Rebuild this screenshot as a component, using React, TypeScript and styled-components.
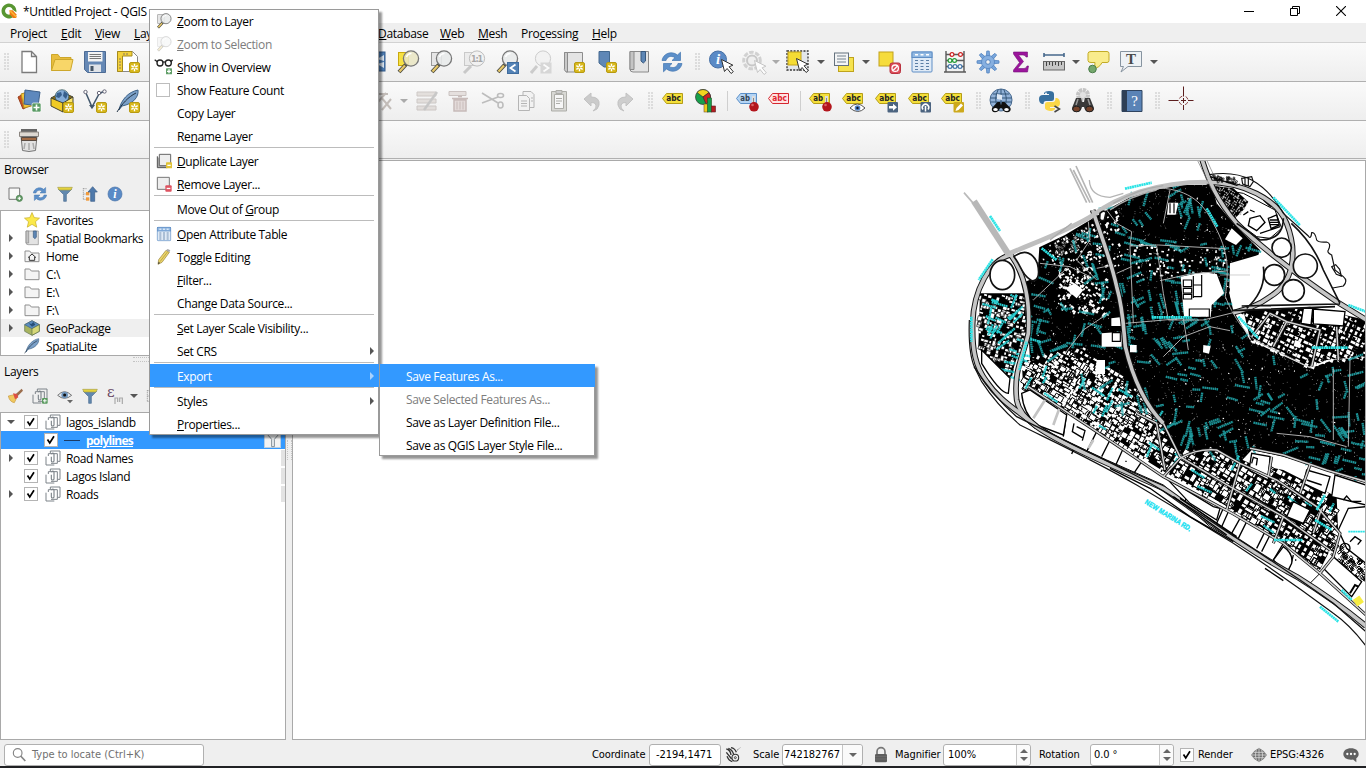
import React from "react";
import styled, { createGlobalStyle } from "styled-components";

const Global = createGlobalStyle`
  * { box-sizing: border-box; }
  html, body { margin: 0; padding: 0; overflow: hidden; background: #efefef; }
  body { font-family: "Open Sans", "Noto Sans", sans-serif; font-size: 12px; color: #000; }
`;

const line = "#a9a9a9";

/* ---------- layout parts ---------- */
const Window = styled.div`
  width: 1366px; height: 768px; display: flex; flex-direction: column;
  position: relative; background: #efefef; overflow: hidden;
`;
const TitleBar = styled.header`
  height: 23px; flex: none; background: #fff; display: flex; align-items: center; padding: 0 2px 2px 1px;
`;
const TitleText = styled.span`margin-left: 6px; padding-top: 1px; letter-spacing: -0.33px; flex: 1; white-space: nowrap;`;
const WinButton = styled.span`width: 46px; height: 20px; display: flex; align-items: center; justify-content: center;`;
const MenuBar = styled.nav`
  height: 20px; flex: none; display: flex; align-items: center; padding-left: 10px;
  border-bottom: 1px solid #d2d2d2; letter-spacing: -0.3px;
`;
const MenuName = styled.span<{ $w: number }>`width: ${(p) => p.$w}px; white-space: nowrap; flex: none; padding-top: 1px;`;
const ToolRow = styled.div<{ $h: number }>`
  height: ${(p) => p.$h}px; flex: none; display: flex; align-items: center; padding-left: 4px;
  background: linear-gradient(#fafafa, #eeeeee); border-bottom: 1px solid #b0b0b0;
`;
const Handle = styled.span<{ $ml?: number }>`
  width: 6px; height: 18px; flex: none; margin-left: ${(p) => p.$ml ?? 0}px;
  background-image: radial-gradient(circle at 1px 1px, #cfcfcf 0.6px, transparent 0.9px);
  background-size: 3px 3px;
`;
const Divider = styled.span<{ $ml: number }>`
  width: 1px; height: 20px; flex: none; margin-left: ${(p) => p.$ml}px; background: #cfcfcf;
`;
const Tool = styled.span<{ $ml: number }>`
  width: 24px; height: 24px; flex: none; margin-left: ${(p) => p.$ml}px; display: flex;
`;
const Caret = styled.span<{ $ml: number; $faded?: boolean }>`
  flex: none; margin-left: ${(p) => p.$ml}px; width: 8px; height: 0; position: relative; left: 1px;
  border: 4px solid transparent; border-top-color: ${(p) => (p.$faded ? "#aaa" : "#555")}; border-bottom: 0;
`;
const Work = styled.main`height: 581px; flex: none; display: flex; padding-top: 1px;`;
const Docks = styled.aside`width: 286px; flex: none; display: flex; flex-direction: column;`;
const DockTitle = styled.div`height: 22px; padding: 1px 0 0 4px; letter-spacing: -0.3px;`;
const DockTools = styled.div`
  height: 28px; display: flex; align-items: center; gap: 9px; padding: 0 0 4px 7px;
`;
const Tree = styled.div<{ $h: number }>`
  height: ${(p) => p.$h}px; flex: none; background: #fff; border: 1px solid ${line}; overflow: hidden;
`;
const TreeRow = styled.div<{ $bg?: string; $fg?: string }>`
  height: 18px; display: flex; align-items: center; white-space: nowrap; letter-spacing: -0.4px;
  background: ${(p) => p.$bg ?? "transparent"}; color: ${(p) => p.$fg ?? "#000"};
`;
const Twisty = styled.span<{ $kind: "closed" | "open" | "none" }>`
  width: 20px; flex: none; display: flex; padding-left: ${(p) => (p.$kind === "open" ? 6 : 8)}px;
  &::before {
    content: ""; display: ${(p) => (p.$kind === "none" ? "none" : "block")};
    border: 4px solid transparent;
    ${(p) => (p.$kind === "open" ? "border-top-color:#555;border-bottom:0;" : "border-left-color:#555;border-right:0;")}
  }
`;
const TreeIcon = styled.span<{ $ml?: number }>`width: 16px; height: 16px; display: flex; flex: none; margin-left: ${(p) => p.$ml ?? 3}px;`;
const TreeText = styled.span<{ $ml: number; $strong?: boolean }>`
  margin-left: ${(p) => p.$ml}px; padding-top: 1px; font-weight: ${(p) => (p.$strong ? 700 : 400)};
  text-decoration: ${(p) => (p.$strong ? "underline" : "none")};
  ${(p) => p.$strong && "letter-spacing:-0.75px;"}
`;
const RowEnd = styled.span<{ $wide?: boolean }>`
  margin-left: auto; height: 16px; width: 4px; background: #e3e3e3;
  display: flex; justify-content: center; align-items: center;
  ${(p) => p.$wide && "width:17px;margin-right:4px;background:#f3f3f3;border:1px solid #b9cfe4;"}
`;
const Check = styled.span<{ $ml?: number }>`
  width: 14px; height: 14px; border: 1px solid #b4b4b4; background: #fff; flex: none; display: flex;
  margin-left: ${(p) => p.$ml ?? 0}px;
`;
const HSplit = styled.div`
  height: 6px; flex: none; display: flex; justify-content: center; align-items: center;
  &::before { content: ""; width: 20px; height: 3px; border: dotted #c4c4c4; border-width: 1px 0; }
`;
const VSplit = styled.div`
  width: 6px; flex: none; display: flex; justify-content: center; align-items: center;
  &::before { content: ""; height: 20px; width: 3px; border: dotted #c4c4c4; border-width: 0 1px; }
`;
const MapFrame = styled.section`flex: 1; background: #fff; border: 1px solid ${line}; display: flex; min-width: 0; overflow: hidden;`;

const Status = styled.footer`
  height: 26px; flex: none; display: flex; align-items: center; padding: 3px 0 0 4px;
  font-family: "DejaVu Sans Condensed", "DejaVu Sans", sans-serif; font-stretch: condensed; font-size: 11px; letter-spacing: -0.08px;
`;
const TaskEdge = styled.div`height: 2px; flex: none; background: #202124;`;
const Field = styled.div<{ $w: number; $ml: number; $pad?: number }>`
  width: ${(p) => p.$w}px; height: 22px; margin-left: ${(p) => p.$ml}px; padding-left: ${(p) => p.$pad ?? 4}px;
  background: #fff; border: 1px solid #b0b0b0; border-radius: 3px; display: flex; align-items: center; flex: none;
  white-space: nowrap;
`;
const FieldEnd = styled.span<{ $w: number }>`
  margin-left: auto; width: ${(p) => p.$w}px; height: 20px; border-left: 1px solid #c6c6c6; display: flex; flex-direction: column;
  align-items: center; justify-content: center; gap: 4px; background: #fafafa; border-radius: 0 3px 3px 0;
`;
const Tri = styled.i<{ $up?: boolean }>`
  width: 0; height: 0; border: 4px solid transparent;
  ${(p) => (p.$up ? "border-bottom-color:#666;border-top:0;" : "border-top-color:#666;border-bottom:0;")}
`;
const StatusText = styled.span<{ $w: number; $ml: number }>`
  width: ${(p) => p.$w}px; margin-left: ${(p) => p.$ml}px; flex: none; white-space: nowrap;
`;
const Placeholder = styled.span`color: #707070; margin-left: 4px; letter-spacing: 0;`;
const StatusIcon = styled.span<{ $ml: number }>`width: 16px; height: 16px; flex: none; display: flex; margin-left: ${(p) => p.$ml}px;`;

/* ---------- popup menus ---------- */
const Popup = styled.div<{ $x: number; $y: number; $w: number }>`
  position: absolute; left: ${(p) => p.$x}px; top: ${(p) => p.$y}px; width: ${(p) => p.$w}px;
  background: #fff; box-shadow: inset 0 0 0 1px #9a9a9a, 3px 3px 2px rgba(0, 0, 0, 0.42);
  letter-spacing: -0.35px;
`;
const Item = styled.div<{ $state?: "on" | "off" }>`
  height: 23px; display: flex; align-items: center; padding: 1px 5px 0 0; margin-left: 1px; white-space: nowrap;
  background: ${(p) => (p.$state === "on" ? "#3399ff" : "transparent")};
  color: ${(p) => (p.$state === "on" ? "#fff" : p.$state === "off" ? "#7d7d7d" : "#000")};
`;
const ItemIcon = styled.span<{ $w: number }>`width: ${(p) => p.$w}px; height: 16px; padding-left: 6px; flex: none; display: flex;`;
const ItemBox = styled.span`width: 14px; height: 14px; margin-top: 1px; border: 1px solid #bdbdbd; background: #fff;`;
const Arrow = styled.span<{ $on?: boolean }>`
  margin-left: auto; border: 4px solid transparent; border-left-color: ${(p) => (p.$on ? "#a8d2ff" : "#555")}; border-right: 0;
`;
const Rule = styled.div`height: 2px; margin: 0 5px; border-top: 1px solid #bcbcbc;`;

/* ---------- icons ---------- */
const StarBadge = ({ x = 12, y = 12 }: { x?: number; y?: number }) => (
  <g transform={`translate(${x} ${y})`}>
    <rect x=".5" y=".5" width="10" height="10" rx="1.5" fill="#d8b81c" stroke="#b79a10" />
    <path d="M5.5 1.8v7.4M2.3 3.6l6.4 3.8M8.7 3.6L2.3 7.4" stroke="#fff" strokeWidth="1.4" />
    <circle cx="5.5" cy="5.5" r="1.1" fill="#d8b81c" />
  </g>
);
const Glass = ({ lens = "#e8eaea" }: { lens?: string }) => (
  <g>
    <path d="M10 14.5L3 22" stroke="#4a4a40" strokeWidth="4" />
    <path d="M9 15.5L3.5 21.5" stroke="#e8c96a" strokeWidth="2.2" />
    <circle cx="15" cy="8.5" r="7.6" fill={lens} fillOpacity=".88" stroke="#777" strokeWidth="1.3" />
    <path d="M10.5 7q1.5-3.5 5-3.4" stroke="#fff" fill="none" strokeWidth="1.5" />
  </g>
);
const Tag = ({ fill = "#f4df3a", edge = "#b59d18", ink = "#222", text = "abc" }: { fill?: string; edge?: string; ink?: string; text?: string }) => (
  <g>
    <path d="M1.5 9.500l4-5h16v10h-16z" fill={fill} stroke={edge} />
    <text x="5.200" y="12.300" fontFamily="DejaVu Sans" fontWeight="700" fontSize="8" textLength={text.length * 4.900} lengthAdjust="spacingAndGlyphs" fill={ink}>{text}</text>
  </g>
);
const Pin = () => (
  <g><path d="M18.500 7v9" stroke="#ddd" strokeWidth="3" /><path d="M18.500 9v8" stroke="#888" /><circle cx="19" cy="17.800" r="4.800" fill="#b3151c" /><circle cx="17.500" cy="16" r="1.300" fill="#d96064" /></g>
);
const Cursor = ({ x = 12, y = 9, edge = "#333" }: { x?: number; y?: number; edge?: string }) => (
  <path transform={`translate(${x} ${y})`} d="M.5.5l3 12 2.600-3 4 5 2.200-1.800-4.200-4.900 3.800-1.600z" fill="#fff" stroke={edge} strokeWidth="1" />
);
const Refresh = () => (
  <g fill="#5c8fc9" stroke="#4276b0" strokeWidth=".7">
    <path d="M2 10.500C3 4 11 0 17.500 5L20.500 2.200V10.500H12L15 7.600C10.500 5 7 7 6 10.500z" />
    <path d="M22 13.500C21 20 13 24 6.500 19L3.500 21.800V13.500H12L9 16.400C13.500 19 17 17 18 13.500z" />
  </g>
);
const Info = ({ r = 11, cx = 12, cy = 12 }: { r?: number; cx?: number; cy?: number }) => (
  <g>
    <circle cx={cx} cy={cy} r={r - 0.5} fill="#5a8ac6" stroke="#466fa5" />
    <text x={cx} y={cy + r * 0.55} textAnchor="middle" fontFamily="Liberation Serif" fontWeight="700" fontStyle="italic" fontSize={r * 1.65} fill="#fff">i</text>
  </g>
);
const Funnel = () => (
  <g><path d="M2 5h20l-8 8v10h-4V13z" fill="#6288ae" stroke="#4a6d92" /><path d="M1 2h22l-2 4H3z" fill="#e4d23c" stroke="#a8a04a" /></g>
);
const GeoBox = () => (
  <g>
    <path d="M1 9l11-6 11 5-10 6z" fill="#8c6c12" stroke="#443" />
    <circle cx="12" cy="7.500" r="6.800" fill="#83acd8" stroke="#355" strokeWidth=".7" />
    <path d="M7 4l4-1 1 3-3 3-3-1zM14 2l4 3-2 5-3-3z" fill="#365f8d" />
    <path d="M1 9l12 5v9L1 17z" fill="#f0cb25" stroke="#443" /><path d="M13 14l10-6v9l-10 6z" fill="#fbe66b" stroke="#443" />
  </g>
);
const Feather = () => (
  <g><path d="M3 21C5 11 12 3 22 1c1 7-5 14-16 16z" fill="#7ba0c8" stroke="#3d6288" /><path d="M1 23C6 15 12 8 20 4" stroke="#234" fill="none" /></g>
);
const Table = () => (
  <g>
    <rect x="2" y="2" width="20" height="20" rx="1" fill="#dfeaf6" stroke="#5f8ec5" /><rect x="2" y="2" width="20" height="5.500" fill="#91b8e2" stroke="#5f8ec5" />
    <path d="M5 4.800h3M10.500 4.800h3M16 4.800h3" stroke="#fff" strokeWidth="1.400" />
    <path d="M5 10.500h3M5 13.500h3M5 16.500h3M5 19.500h3M10.500 10.500h3M10.500 13.500h3M10.500 16.500h3M10.500 19.500h3M16 10.500h3M16 13.500h3M16 16.500h3M16 19.500h3" stroke="#5b7ea5" strokeWidth="1.200" />
  </g>
);
const GroupGlyph = () => (
  <g fill="none" stroke="#7c8389" strokeWidth="1.500">
    <path d="M8 5V1.500h14.500V17H19" /><path d="M5 9V5.500h13.500V20H9" /><path d="M1.500 10v12.500H14" />
    <path d="M9.500 10v6a2 2 0 004 0V6.500a1.800 1.800 0 00-3.600 0" strokeWidth="1.700" />
  </g>
);
const Folder = () => <path d="M1.500 20.500v-16h7l2.500 3h11.500v13z" fill="#f4f4f4" stroke="#8e8e8e" strokeWidth="1.500" />;
const EyeGlyph = () => (
  <g><path d="M1 11Q11 0 22 11 11 20 1 11z" fill="#e4e9ee" stroke="#777" strokeWidth="1.500" /><circle cx="11.500" cy="10.500" r="5" fill="#6f95bc" /><circle cx="11.500" cy="10.500" r="2.300" fill="#111" /></g>
);

const glyphs: Record<string, React.ReactNode> = {
  newFile: <path d="M5 1.500h9.500l5 5v16H5z M14.500 1.500v5h5" fill="#fff" stroke="#7b7b7b" strokeWidth="1.300" />,
  open: <g stroke="#cda72b"><path d="M1.500 20.500V4.500h6.500l2 3h11v5" fill="#e8bd3d" /><path d="M1.500 20.500l3.500-11h18l-2.500 11z" fill="#f8d668" /></g>,
  save: <g><path d="M1.500 1.500h21v21h-18l-3-3z" fill="#6588b5" stroke="#4d6b94" /><rect x="5" y="2" width="14.500" height="9.500" fill="#f4f4f4" /><path d="M6.500 4.500h11.500M6.500 6.500h11.500M6.500 8.500h11.500" stroke="#777" /><rect x="6" y="14.500" width="12" height="7.500" fill="#dfe3e8" /><rect x="7.500" y="16" width="3" height="5" fill="#456" /></g>,
  layout: <g><path d="M1.500 1.500h15l5 5v15h-20z" fill="#fff" stroke="#888" /><path d="M1.500 1.500H16V6H6.500v15.500h-5z" fill="#f3d13b" stroke="#a58a1c" /><path d="M3 9h2M3 12h2M3 15h2M3 18h2M8 3v2M11 3v2" stroke="#876" /><StarBadge x={13} /></g>,
  zoomFull: <g><rect x="8" y="2" width="14" height="19" fill="#4f7fb5" stroke="#335b8b" /><path d="M14 9l7-4v6zM14 14l7 4v-6z" fill="#dce7f3" /></g>,
  zoomSel: <g><rect x="2.500" y="2.500" width="10" height="13" fill="#f6e143" stroke="#c9a90e" /><Glass lens="#e9e6c4" /></g>,
  zoomLayer: <g><rect x="2.500" y="2.500" width="10" height="13" fill="#e6e6e6" stroke="#999" /><Glass /></g>,
  zoomNative: <g opacity=".75"><rect x="2.500" y="2.500" width="10" height="13" fill="#e9e9e9" stroke="#bbb" /><path d="M9 16l-7 7" stroke="#bbb" strokeWidth="3" /><circle cx="15" cy="8.500" r="7.600" fill="#f1f1f1" stroke="#aaa" /><text x="15" y="11.800" textAnchor="middle" fontFamily="DejaVu Sans" fontWeight="700" fontSize="8" textLength="12" fill="#8e8e8e">1:1</text></g>,
  zoomLast: <g><Glass /><rect x="12.500" y="12.500" width="11" height="11" fill="#5382b6" stroke="#3f6c9e" /><path d="M20.500 14.500l-5 3.500 5 3.500" stroke="#fff" strokeWidth="1.800" fill="none" /></g>,
  zoomNext: <g opacity=".7"><path d="M9 16l-6 7" stroke="#bbb" strokeWidth="3" /><circle cx="15" cy="8.500" r="7.600" fill="#f1f1f1" stroke="#bbb" /><rect x="12.500" y="12.500" width="11" height="11" fill="#ccc" /><path d="M15.500 14.500l5 3.500-5 3.500" stroke="#fff" strokeWidth="1.800" fill="none" /></g>,
  mapView: <g><path d="M3.500 18V2.500h18v19.500H5" fill="#e4e4e4" stroke="#8c8c8c" /><path d="M3.500 18a3 3 0 003 4V2.500h-3z" fill="#c9c9c9" stroke="#8c8c8c" /><StarBadge x={13} /></g>,
  bookmark: <g><path d="M5 1.500h10.500v19l-4-3.500H10L5 13z" fill="#5f87b6" stroke="#44698f" /><StarBadge x={12} /></g>,
  bookmarks: <g><path d="M3 1.500h18.500v20.500H6a3 3 0 01-3-3z" fill="#e3e3e3" stroke="#8a8a8a" /><path d="M3 1.500h4v18H3z" fill="#c4c4c4" stroke="#8a8a8a" /><path d="M14 1.500h4.500V11l-2.200 2-2.300-2z" fill="#5d86b5" stroke="#38597e" /></g>,
  refresh: <Refresh />,
  identify: <g><Info r={9} cx={10} cy={9.500} /><Cursor x={13} y={9} /></g>,
  action: <g opacity=".8"><circle cx="11" cy="10.500" r="8.300" fill="none" stroke="#c9c9c9" strokeWidth="3" strokeDasharray="4.500 1.500" /><circle cx="11" cy="10.500" r="5" fill="#eee" stroke="#bdbdbd" strokeWidth="2" /><Cursor x={13} y={10} edge="#bbb" /></g>,
  select: <g><rect x="1" y="1" width="21" height="19" fill="#e3e6ea" stroke="#333" strokeWidth="1.300" strokeDasharray="2 1.300" /><rect x="2" y="2" width="13" height="13" fill="#f5dc34" stroke="#c4a31a" /><Cursor x={10} y={8} /></g>,
  form: <g><rect x="6.500" y="7.500" width="15" height="14" fill="#f6e34f" stroke="#bfa31c" /><rect x="2.500" y="3" width="14" height="12.500" fill="#f4f5f6" stroke="#65727e" /><path d="M5 6h9M5 9h9M5 12h9" stroke="#75828e" /></g>,
  deselect: <g><rect x="2" y="2" width="14" height="14" fill="#f6dc3c" stroke="#c2a21c" /><rect x="13" y="13" width="10.500" height="10.500" rx="2" fill="#dd4d5a" stroke="#b8323f" /><circle cx="18.200" cy="18.200" r="3.200" stroke="#fff" fill="none" strokeWidth="1.300" /><path d="M16 20.500l4.500-4.500" stroke="#fff" strokeWidth="1.300" /></g>,
  table: <Table />,
  abacus: <g fill="none"><path d="M3 1v21M21 1v21M1 22h22M3 4.500h18M3 10.500h18M3 16.500h18" stroke="#5a5a5a" strokeWidth="1.400" /><g strokeWidth="1.200" fill="#fff"><circle cx="9" cy="4.500" r="1.900" stroke="#c22" /><circle cx="17.500" cy="4.500" r="1.900" stroke="#c22" /><circle cx="7" cy="10.500" r="1.900" stroke="#293" /><circle cx="11.500" cy="10.500" r="1.900" stroke="#293" /><circle cx="7" cy="16.500" r="1.900" stroke="#47a" /><circle cx="12" cy="16.500" r="1.900" stroke="#47a" /><circle cx="17" cy="16.500" r="1.900" stroke="#47a" /></g></g>,
  gear: <g>{[0, 45, 90, 135, 180, 225, 270, 315].map((a) => <path key={a} transform={`rotate(${a} 12 12)`} d="M10.300 6l.5-5h2.400l.5 5z" fill="#79a6dc" stroke="#5585c0" strokeWidth=".8" />)}<circle cx="12" cy="12" r="6.500" fill="#86afe0" stroke="#5585c0" strokeWidth=".8" /><circle cx="12" cy="12" r="2.300" fill="#f2f2f2" stroke="#5585c0" /></g>,
  sigma: <path d="M4.500 2h14v5h-1.500q-.5-2-3-2H9.500l5 6.500L8.500 18.500H15q2.500 0 3-2.500h1.500L18.500 22h-14v-2l6-7.500L4.500 4z" fill="#9c159c" stroke="#74107a" strokeWidth=".6" />,
  measure: <g><path d="M2 5h20M2 3v4M22 3v4" stroke="#47688c" strokeWidth="1.600" /><rect x="1.500" y="11.500" width="21" height="8.500" fill="#c6c6c6" stroke="#666" /><path d="M4.500 12v4M7.500 12v3M10.500 12v4M13.500 12v3M16.500 12v4M19.500 12v3" stroke="#444" /></g>,
  tip: <g><path d="M5 1.500h16q2 0 2 2v7q0 2-2 2H16q-2 5-9 6.500 2.500-3 2-6.500H5q-3 0-3-2v-7q0-2 3-2z" fill="#f9ec8c" stroke="#c2ab26" /><circle cx="6.500" cy="19" r="3.800" fill="#75a86d" stroke="#4a7c49" /></g>,
  text: <g><path d="M1.500 1.500h21v15H9L2 22l2.500-5.500h-3z" fill="#eef2f5" stroke="#8794a0" /><text x="12" y="14" textAnchor="middle" fontFamily="Liberation Serif" fontWeight="700" fontSize="15" fill="#4a4a4a">T</text></g>,
  addLayer: <g><path d="M1 8l9-5 6 12-10 5z" fill="#c94f22" stroke="#98401c" /><path d="M4 5l10-3 4 14-11 3z" fill="#f3c43b" stroke="#b88d1e" /><path d="M8 1l15 2-2 14-14-2z" fill="#5d88bd" stroke="#3d618c" /><rect x="15" y="14" width="9" height="9" rx="1.500" fill="#589a63" stroke="#fff" strokeWidth=".7" /><path d="M19.500 15.500v6M16.500 18.500h6" stroke="#fff" strokeWidth="1.600" /></g>,
  geopackage: <g><GeoBox /><StarBadge x={13} y={13} /></g>,
  vector: <g><path d="M2.500 3L9 18 16 5l5-3" fill="none" stroke="#41566b" strokeWidth="1.500" /><g fill="#fff" stroke="#667"><circle cx="2.500" cy="3" r="1.700" /><circle cx="16" cy="4" r="1.700" /><circle cx="21.500" cy="2.500" r="1.700" /></g><path d="M6 16l3 4 3-4z" fill="#41566b" /><StarBadge x={13} y={13} /></g>,
  feather: <g><Feather /><StarBadge x={13} y={13} /></g>,
  vertexTool: <g stroke="#c2bcb8" fill="none" strokeWidth="2"><path d="M3 5h14M15 4l-8 9M10 8l10 12M20 10l-9 11" /></g>,
  editAttr: <g opacity=".6"><path d="M2 3h19v4H2zM2 10h19v4H2zM2 17h19v4H2z" fill="#d7d0cc" stroke="#b4aca8" /><path d="M22 3L9 21" stroke="#aaa" strokeWidth="2.500" /></g>,
  del: <g opacity=".65"><path d="M2 2.500h17v4H2z" fill="#ddd5d2" stroke="#b4a8a5" /><path d="M5 9.500h16M7 11h12v11H7zM11 7.500h4" fill="#dccfcd" stroke="#b19f9c" strokeWidth="1.500" /><path d="M10 12.500v8M13 12.500v8M16 12.500v8" stroke="#b19f9c" /></g>,
  cut: <g fill="none" stroke="#bdbdbd" strokeWidth="1.600"><path d="M1 4l16 10M1 14L17 8" /><ellipse cx="19.500" cy="6.500" rx="3" ry="2" /><ellipse cx="19.500" cy="16" rx="2.500" ry="3" /></g>,
  copy: <g fill="#f2f2f2" stroke="#b5b5b5"><path d="M9 2.500h8l3 3v13H9z" /><path d="M4.500 6.500h8l3 3v12h-11z" /><path d="M7 12h6M7 14.500h6M7 17h6M17 9h2M17 12h2" /></g>,
  paste: <g stroke="#adada8"><path d="M4.500 2.500h15v19.500h-15z" fill="#d8d8d4" /><path d="M7.500 5.500h9v14h-9z" fill="#f6f6f6" /><path d="M9 1.500h6v3H9zM9 9.500h6M9 12h6M9 14.500h4" fill="#ccc" /></g>,
  undo: <path d="M4 10l7-6v4q9 0 8 8-1 5-6 6 4-3 3-6-1-3-5-2.500V17z" fill="#cbcbcb" stroke="#c2c2c2" />,
  redo: <path d="M20 10l-7-6v4q-9 0-8 8 1 5 6 6-4-3-3-6 1-3 5-2.500V17z" fill="#cecece" stroke="#c2c2c2" />,
  abc: <Tag />,
  diagram: <g><circle cx="9" cy="8" r="7.500" fill="#16a04b" stroke="#333" strokeWidth=".7" /><path d="M9 8L3 3.500A7.500 7.500 0 0115 3.500z" fill="#f2d51f" stroke="#333" strokeWidth=".7" /><path d="M9 8l6-4.500a7.500 7.500 0 01-3 11.500z" fill="#cc2121" stroke="#333" strokeWidth=".7" /><rect x="10" y="15" width="4" height="8" fill="#efcd19" stroke="#753" strokeWidth=".6" /><rect x="13.500" y="9" width="4" height="14" fill="#189e4d" stroke="#252" strokeWidth=".6" /><rect x="17.500" y="17" width="4" height="6" fill="#b71d20" stroke="#522" strokeWidth=".6" /></g>,
  abcPinBlue: <g><Tag fill="#b4d4f4" edge="#5b90c9" ink="#345" text="ab" /><Pin /></g>,
  abcRed: <Tag fill="#ffe3e3" edge="#d6262f" ink="#e0252f" />,
  abcPin: <g><Tag text="ab" /><Pin /></g>,
  abcEye: <g><Tag /><path d="M9 19q7-8 15 0-7 7-15 0z" fill="#fff" stroke="#555" /><circle cx="16.500" cy="19" r="2.800" fill="#5385c9" /><circle cx="16.500" cy="19" r="1.200" fill="#112" /></g>,
  abcMove: <g><Tag /><rect x="13.500" y="13" width="10.500" height="10.500" rx="1" fill="#4c6480" /><path d="M15 17h4v-2.200l4 3.500-4 3.500V19.500h-4z" fill="#fff" /></g>,
  abcRotate: <g><Tag /><rect x="13.500" y="13" width="10.500" height="10.500" rx="1" fill="#4c6480" /><path d="M16 20.500a3.200 3.200 0 115 0M18.500 17v5.500" fill="none" stroke="#fff" strokeWidth="1.500" /></g>,
  abcEdit: <g><Tag /><rect x="13.500" y="13" width="10.500" height="10.500" rx="1" fill="#cda91c" /><path d="M15.500 22l1-3 4.500-4.500 2 2L18.500 21z" fill="#fff" /></g>,
  globe: <g><circle cx="12" cy="11" r="11" fill="#92b2d8" stroke="#48698e" /><path d="M4 5h16M1.500 9h21M1.500 13h21M9 1q-4 8-1 16M15 1q4 8 1 16M12 0v15" stroke="#345779" fill="none" /><path d="M8 5l5 1v5l-5-1z" fill="#dfe9f4" /><path d="M8.500 13h2.500l1 3 1-3h2.500l6 6q1 4-3.500 4.300-3.500 0-5-4h-2q-1.500 4-5 4Q2 23 3 19z" fill="#111" /><ellipse cx="6.500" cy="20.500" rx="2.300" ry="1.600" fill="#fff" /><ellipse cx="17.500" cy="20.500" rx="2.300" ry="1.600" fill="#fff" /></g>,
  python: <g><path d="M11 2q5 0 5 3v5q0 2-2.500 2H8q-2.500 0-2.500 3H4q-3-1-3-5 0-4 4-4h6V5H6V4q1-2 5-2z" fill="#38709f" /><path d="M12 22q-5-1-5-3v-4q0-2 2.500-2H15q2.500 0 2.500-4H19q3 1 3 5t-4 4h-6v1h5v1q-1 2-5 2z" fill="#fbd748" /><circle cx="8" cy="4.500" r=".9" fill="#fff" /><path d="M16.500 17l5 3-5 3" fill="none" stroke="#444" strokeWidth="1.500" /></g>,
  binoculars: <g><circle cx="12" cy="6" r="5" fill="#e2e2e2" stroke="#c4c4c4" strokeWidth="4" strokeDasharray="3 .8" /><path d="M5 9h5l1 4h2l1-4h5l4 10q0 4-5 4-4 0-5-5h-2q-1 5-5 5-5 0-5-4z" fill="#393939" /><ellipse cx="5.500" cy="20" rx="3.800" ry="2.800" fill="#76432b" stroke="#222" /><ellipse cx="18.500" cy="20" rx="3.800" ry="2.800" fill="#76432b" stroke="#222" /><path d="M7 10l-2 6M17 10l2 6" stroke="#999" strokeWidth="1.500" /></g>,
  help: <g><path d="M2 1.500h20v21H2z" fill="#5a83b6" stroke="#2f4460" /><path d="M2 1.500h5v21H2z" fill="#2e3f55" /><text x="14.500" y="16.500" textAnchor="middle" fontFamily="Liberation Serif" fontSize="15" fill="#fff">?</text></g>,
  cross: <g fill="none" stroke="#5c1e1e"><path d="M12.500-2.500v10M12.500 16v5M-2.500 11.500h10M17 11.500h5.500M12.500 9v5M10 11.500h5" strokeWidth="1" /><circle cx="12.500" cy="11.500" r="4.500" strokeDasharray="3.500 3.570" strokeDashoffset="-1.700" stroke="#844" /></g>,
  jar: <g><path d="M4 1h16v3H4z" fill="#666" /><path d="M2.500 4h19v4.500h-19z" fill="#ddd8d2" stroke="#8b8580" /><path d="M4 8.500h16l-1.500 14q-6.500 2-13 0z" fill="#e2e2e2" stroke="#777" /><path d="M4.500 9.500h15v3h-15z" fill="#a36c46" stroke="#5b4c42" /><path d="M8 15l-1 6M12 15v7M16 15l1 6" stroke="#aaa" strokeWidth="1.500" /></g>,
  addItem: <g><path d="M3 3h16v17H3z" fill="#f8f8f8" stroke="#777" strokeWidth="1.500" /><circle cx="18.500" cy="18.500" r="4.700" fill="#659c68" stroke="#447a48" /><path d="M18.500 16v5M16 18.500h5" stroke="#fff" strokeWidth="1.600" /></g>,
  funnel: <Funnel />,
  collapse: <g><path d="M2 3v18M2 4h6M2 12h6M2 20h6" stroke="#888" fill="none" strokeDasharray="2 1" /><rect x="6" y="9" width="5" height="5" fill="#f19b3d" /><rect x="6" y="17" width="5" height="5" fill="#f19b3d" /><path d="M16 1l7 8h-4v14h-6V9H9z" fill="#4f79ab" stroke="#365b87" /></g>,
  info: <Info />,
  star: <path d="M12 .8l3.300 7.600 8 .8-6.100 5.400 1.900 8.200L12 18.500l-7.100 4.300 1.900-8.200L.7 9.200l8-.8z" fill="#fbe94a" stroke="#c4a923" />,
  home: <g><Folder /><path d="M6 14.500l6-5.500 6 5.500M8 13.500v5h8v-5" fill="none" stroke="#333" strokeWidth="1.500" /></g>,
  folder: <Folder />,
  box: <g><path d="M1 7l11-6 11 6v10l-11 6L1 17z" fill="#a8b460" stroke="#5c6f49" /><path d="M1 7l11-6 11 6-11 6z" fill="#5b8dbf" stroke="#3e6186" /><path d="M12 13l11-6v10l-11 6z" fill="#d6d879" stroke="#5c6f49" /><path d="M7 5l4 1 3-3 3 4-5 3z" fill="#274f78" /></g>,
  quill: <Feather />,
  group: <GroupGlyph />,
  addGroup: <g><GroupGlyph /><rect x="15" y="15" width="8.500" height="8.500" rx="1.500" fill="#5b9b60" /><path d="M19.200 16.500v5.500M16.500 19.200H22" stroke="#fff" strokeWidth="1.500" /></g>,
  brush: <g><path d="M22 1l2 3-9 9-3-3z" fill="#9b6d4d" /><path d="M2 12l9-2 4 4-4 8Q4 21 2 12z" fill="#f0c85f" stroke="#c99a3e" /><path d="M9 8l6 1 2 5-5 3z" fill="#dd4f43" /></g>,
  eye: <g><EyeGlyph /><path d="M15 18h9l-4.500 5z" fill="#666" /></g>,
  epsilon: <g><text x="0" y="14" fontFamily="DejaVu Serif" fontSize="22" fill="#65435f">ε</text><path d="M12 24v-9h4v6M23 24v-9h-4v6" fill="none" stroke="#aaa" strokeWidth="1.800" /></g>,
  filterOut: <path d="M3 3h18l-7 8v11h-4V11z" fill="#f2f5f7" stroke="#7f8b94" strokeWidth="1.500" />,
  tick: <path d="M5 11l4.500 7L18 4.500" fill="none" stroke="#000" strokeWidth="3.400" />,
  overview: <g fill="none" stroke="#222" strokeWidth="2"><circle cx="6" cy="6" r="4.500" /><circle cx="18.500" cy="6" r="4.500" /><path d="M10 5q2-1.500 4 0M2 4L-2 1M22 4l3-3" /><rect x="15" y="14" width="9" height="9" rx="1" fill="#62a069" stroke="none" /><path d="M19.500 15.500v6M16.500 18.500h6" stroke="#fff" /></g>,
  duplicate: <g><path d="M2 5v17h15" fill="#aaa" stroke="#555" strokeWidth="1.500" /><path d="M5 2h17v17H5z" fill="#eee" stroke="#666" strokeWidth="1.500" /><rect x="15" y="14" width="9" height="9" rx="1" fill="#e0c235" /><path d="M17 18.500h5" stroke="#fff" strokeWidth="2" /></g>,
  remove: <g><path d="M2 2h18v18H2z" fill="#eee" stroke="#777" strokeWidth="1.500" /><rect x="14" y="14" width="9.500" height="9.500" rx="1.500" fill="#de5360" /><path d="M16 18.700h5.500" stroke="#fff" strokeWidth="2" /></g>,
  pencil: <g><path d="M15 2l5 3L9 20l-6 3 1-7z" fill="#ecd56a" stroke="#96803a" /><path d="M17.500 4L6 19" stroke="#a58f38" /><path d="M15 2l5 3 1.500-3-4-2z" fill="#aaa" /><path d="M4 19l2 2-3 2z" fill="#333" /></g>,
  search: <g fill="none" stroke="#858585"><circle cx="8.500" cy="9" r="6.500" strokeWidth="1.700" /><path d="M13 13.500l7 7.500" strokeWidth="2.500" /></g>,
  extents: <g fill="none" stroke="#333" strokeWidth="2"><path d="M2 3q6 1 7 9M5 2q6 2 8 9M9 1q6 1 8 7M2 8l8 10M3 14q3 7 8 8" /><circle cx="15.500" cy="16" r="5" strokeWidth="1.600" fill="#eee" /><circle cx="15.500" cy="16" r="1.500" strokeWidth="1.300" /><path d="M18 5l5-4" strokeWidth="1.200" strokeDasharray="1.500 1.500" /></g>,
  lock: <g><path d="M6 11V7a6 6 0 0112 0v4" fill="none" stroke="#777" strokeWidth="2.500" /><rect x="3" y="10.500" width="18" height="12.500" rx="2" fill="#5c5c5c" /><path d="M3 14h18M3 18h18" stroke="#777" /></g>,
  crs: <g><path d="M0 12L4 7 12 1l8 6 4 5-4 5-8 6-8-6z" fill="#8a8a8a" /><circle cx="12" cy="12" r="9" fill="#6f6f6f" /><path d="M2 12h20M4 8h16M4 16h16M12 2v20M8 4q-3 8 0 16M16 4q3 8 0 16" stroke="#e1e1e1" strokeWidth="1.100" fill="none" /></g>,
  bubble: <g><path d="M12 2c7 0 11.500 3.500 11.500 8.500 0 3-1.500 5-3.500 6.200V23l-5-4.200c-8 1.400-14.500-2.300-14.500-8.300C.5 5.500 5 2 12 2z" fill="#606060" /><circle cx="6.500" cy="10.500" r="1.700" fill="#fff" /><circle cx="12" cy="10.500" r="1.700" fill="#fff" /><circle cx="17.500" cy="10.500" r="1.700" fill="#fff" /></g>,
  logo: <g><path d="M12 0.800a11.200 11.200 0 107.500 19.500l-4-4A5.800 5.800 0 1117.500 10l5.500 4A11.200 11.200 0 0012 .8z" fill="#589632" /><path d="M13 11h4.500l5.500 6v5.500h-5L13 17z" fill="#ee7913" /><path d="M13 11l10 10" stroke="#f9b233" strokeWidth="2.500" /></g>,
};

const Svg = styled.svg`width: 100%; height: 100%; display: block; overflow: visible;`;
const MapSvg = styled(Svg)`overflow: hidden;`;
const Icon = ({ n }: { n: string }) => <Svg viewBox="0 0 24 24">{glyphs[n]}</Svg>;

/* ---------- map ---------- */
type P = [number, number];
type Draw = (x: number, y: number, r: () => number) => string;
const rng = (seed: number) => () => {
  seed = (seed + 0x6d2b79f5) | 0;
  let t = Math.imul(seed ^ (seed >>> 15), 1 | seed);
  t = (t + Math.imul(t ^ (t >>> 7), 61 | t)) ^ t;
  return ((t ^ (t >>> 14)) >>> 0) / 4294967296;
};
const inside = (x: number, y: number, poly: P[]) => {
  let hit = false;
  for (let i = 0, j = poly.length - 1; i < poly.length; j = i++) {
    const [xi, yi] = poly[i], [xj, yj] = poly[j];
    if (yi > y !== yj > y && x < ((xj - xi) * (y - yi)) / (yj - yi) + xi) hit = !hit;
  }
  return hit;
};
const scatter = (poly: P[], count: number, seed: number, draw: Draw) => {
  const r = rng(seed);
  const xs = poly.map((p) => p[0]), ys = poly.map((p) => p[1]);
  const x0 = Math.min(...xs), x1 = Math.max(...xs), y0 = Math.min(...ys), y1 = Math.max(...ys);
  let out = "";
  for (let i = 0; i < count; i++) {
    const x = x0 + r() * (x1 - x0), y = y0 + r() * (y1 - y0);
    if (inside(x, y, poly)) out += draw(x, y, r);
  }
  return out;
};
const quad = (x: number, y: number, w: number, h: number, deg: number) => {
  const a = (deg * Math.PI) / 180, c = Math.cos(a), s = Math.sin(a);
  return `M${x.toFixed(1)} ${y.toFixed(1)}l${(w * c).toFixed(1)} ${(w * s).toFixed(1)}l${(-h * s).toFixed(1)} ${(h * c).toFixed(1)}l${(-w * c).toFixed(1)} ${(-w * s).toFixed(1)}z`;
};
const block = (deg: number, min: number, max: number): Draw => (x, y, r) =>
  quad(x, y, min + r() * (max - min), min + r() * (max - min) * 0.6, deg + (r() > 0.5 ? 90 : 0));
/* City blocks on a tilted grid, with a share of the cells left out. */
const grid = (poly: P[], deg: number, stepX: number, stepY: number, keep: number, seed: number) => {
  const r = rng(seed), a = (deg * Math.PI) / 180, c = Math.cos(a), s = Math.sin(a);
  const ox = poly[0][0], oy = poly[0][1];
  let out = "";
  for (let v = -1300; v < 1300; v += stepY)
    for (let u = -1300; u < 1300; u += stepX) {
      const x = ox + u * c - v * s, y = oy + u * s + v * c;
      const k = r(), w = stepX * (0.35 + r() * 0.6), h = stepY * (0.4 + r() * 0.5);
      if (k < keep && inside(x, y, poly)) out += quad(x, y, w, h, deg);
    }
  return out;
};
const streetLabel = (seed: number, sets: number[]): Draw => (x, y, r) => {
  const cell = Math.floor(x / 85) * 7 + Math.floor(y / 75) * 13 + seed;
  const pick = sets[((cell % sets.length) + sets.length) % sets.length];
  const deg = pick + (r() > 0.8 ? 90 : 0) + (r() - 0.5) * 12;
  const a = (deg * Math.PI) / 180, l = 20 + r() * 32;
  return `M${x.toFixed(1)} ${y.toFixed(1)}l${(l * Math.cos(a)).toFixed(1)} ${(l * Math.sin(a)).toFixed(1)}`;
};
const poly = (p: P[]) => "M" + p.map((q) => q.join(" ")).join("L") + "Z";

const core: P[] = [[268, 262], [345, 225], [420, 180], [470, 150], [540, 112], [640, 84], [700, 75], [785, 74], [800, 130], [850, 190], [930, 270], [925, 285], [850, 320], [838, 400], [850, 452], [900, 540], [1080, 625], [1150, 600], [1248, 592], [1248, 965], [1120, 925], [1000, 890], [905, 870], [868, 910], [790, 870], [660, 880], [600, 760], [430, 700], [380, 620], [240, 600], [230, 420], [215, 370], [262, 350]];
const west: P[] = [[90, 400], [225, 400], [230, 520], [195, 610], [185, 655], [130, 620], [85, 560]];
const south: P[] = [[215, 600], [420, 600], [600, 740], [660, 860], [790, 860], [900, 910], [1000, 930], [1160, 1010], [1165, 1130], [1140, 1170], [1110, 1230], [1000, 1150], [850, 1050], [650, 940], [440, 810], [220, 690]];
const southWest: P[] = [[220, 590], [400, 560], [560, 680], [640, 800], [620, 900], [440, 800], [220, 690]];
const harbour: P[] = [[225, 690], [290, 715], [440, 815], [640, 950], [850, 1062], [1000, 1150], [1110, 1240], [1080, 1270], [920, 1180], [780, 1100], [640, 975], [470, 900], [320, 830], [240, 780]];
const east: P[] = [[880, 450], [960, 450], [1080, 440], [1248, 480], [1248, 590], [1130, 600], [1080, 622], [900, 535]];
const airstrip: P[] = [[795, 78], [850, 85], [895, 125], [880, 150], [850, 180], [815, 130]];
const islet: P[] = [[1145, 1150], [1180, 1150], [1248, 1200], [1248, 1260], [1190, 1240], [1150, 1200]];

const northRoad = "M170 284C260 245 350 215 430 165C500 110 620 66 770 66";
const mains = [
  "M182 284C120 300 70 390 68 490C66 570 76 620 110 665C150 725 210 755 260 800C330 850 480 915 640 985C740 1055 880 1165 1040 1250C1120 1300 1190 1350 1248 1398",
  "M182 284C230 350 240 440 235 520C220 590 190 630 200 720C205 750 225 775 260 800",
  "M770 66C880 68 980 115 1010 190C1045 280 1030 370 960 410C920 440 880 450 850 458",
  "M755 -5C775 60 800 120 860 190C940 270 1050 350 1160 425L1250 480",
  "M428 150C450 220 480 290 500 380C520 450 520 500 526 560C545 640 580 730 640 790",
];
const coreStreets = [
  "M630 84C720 90 760 130 790 190C840 280 835 330 826 410C850 470 890 530 930 548L1085 625",
  "M540 258L625 255L825 266", "M620 258L640 400L655 480L760 480L850 458", "M527 490L700 475", "M540 260L550 490",
  "M630 362L720 342L830 333", "M470 150L500 190L545 215L540 260", "M660 90L640 190M415 185L420 240L380 300L440 360", "M440 325L490 315M500 340L545 320",
  "M270 310L360 320L420 350M350 325L250 420", "M345 580L400 510L460 470", "M640 590L700 530L780 500L840 512", "M700 475L715 570",
  "M1150 625L1150 840M1200 600L1195 860M980 820L1080 830L1190 860",
];
const streets = [
  "M235 680L440 815L640 950L850 1062L1000 1150L1110 1240L1248 1365", "M640 790L690 890L840 980L1000 1070L1140 1170",
  "M640 950L690 895Q740 865 800 870L870 910L980 960L1100 1040L1170 1120L1150 1190L1110 1240", "M900 865L1000 885L1130 930L1248 965",
  "M560 760L620 790L645 930M870 910L830 1050M965 890L955 950M1080 915L1050 1000M1000 1070L970 1150M1115 1045L1090 1120",
  "M905 530L960 460L1010 485L970 560M1010 485L1110 510L1085 620M1160 500L1165 600",
];

const MapDrawing = () => (
  <MapSvg viewBox="293 161 1072 578" preserveAspectRatio="xMinYMin meet">
    <g transform="translate(950 160) scale(.33333)">
      <path d={poly(core)} fill="#000" />
      <path d={poly(west)} fill="#000" />
      <path d={poly(south)} fill="#000" />
      <path d={scatter(core, 2600, 7, block(18, 1.2, 3.4))} fill="#bbb" />
      <path d={scatter(core, 260, 70, block(18, 2, 6))} fill="#fff" />
      <path d={scatter([[290, 255], [430, 190], [500, 150], [520, 330], [330, 370]], 210, 17, block(-28, 4, 10))} fill="#fff" />
      <path d={scatter([[290, 255], [420, 195], [415, 240], [350, 290]], 90, 18, block(-28, 6, 14))} fill="#fff" stroke="#000" strokeWidth="2" />
      <path d={scatter([[540, 250], [830, 260], [830, 340], [550, 350]], 90, 19, block(5, 4, 9))} fill="#fff" />
      <path d={scatter([[320, 350], [480, 350], [470, 470], [330, 450]], 110, 20, block(35, 4, 11))} fill="#fff" />
      <path d={grid(west, 15, 13, 11, 0.55, 21)} fill="#fff" />
      <path d={scatter(west, 70, 22, block(15, 8, 18))} fill="#fff" stroke="#000" strokeWidth="2" />
      <path d={grid(southWest, 31, 15, 13, 0.62, 5)} fill="#fff" />
      <path d={scatter(southWest, 190, 55, block(31, 6, 20))} fill="#fff" stroke="#000" strokeWidth="3" />
      <path d={grid(south, 31, 19, 16, 0.8, 3)} fill="#fff" />
      <path d={scatter(south, 720, 35, block(31, 10, 27))} fill="#fff" stroke="#000" strokeWidth="3" />
      <path d={scatter(south, 620, 31, block(31, 3, 10))} fill="#000" />
      <path d={poly(harbour)} fill="#fff" stroke="#000" strokeWidth="3" />
      <path d="M350 760l-10 70M440 815l-30 60M480 840l-25 50M520 865l-25 55M575 905l-30 45M720 990l-20 45M820 1045l-20 45M835 1055l-20 45M870 1075l-25 45M890 1085l-25 50M945 1115l-25 50M960 1125l-25 50M1000 1150l-30 50M380 800l25 12-8 30M372 790l-5 25 30 18" stroke="#000" strokeWidth="4" fill="none" />
      <path d="M1010 1240q15-30 20-55M526 904h4M1035 1200h4" stroke="#000" strokeWidth="4" fill="none" />
      <path d={poly(east)} fill="#000" />
      <path d={grid(east, 25, 16, 15, 0.92, 12)} fill="#fff" />
      <path d={scatter(east, 160, 13, block(25, 5, 12))} fill="#000" />
      <path d={scatter(islet, 150, 6, block(42, 4, 14))} fill="#fff" stroke="#000" strokeWidth="3" />

      <g fill="none" stroke="#1fa3a7" strokeWidth="7" strokeDasharray="5 1.200">
        <path d={scatter(core, 520, 77, streetLabel(3, [78, 12, -30, 15, -72, 8, 82, -18, 55]))} strokeOpacity=".9" />
        <path d={scatter(south, 100, 79, streetLabel(1, [-58, 30, -65, 35]))} stroke="#27cdd0" />
        <path d={scatter(west, 44, 80, streetLabel(2, [25, -40, 15]))} stroke="#27cdd0" />
      </g>

      <path d="M692 350L760 337L800 342L822 400L785 435L782 470L702 470Z M840 310L925 285Q950 350 905 415L895 430Q860 390 838 385Z M838 395Q885 400 888 430L850 445Z M845 205L878 235L858 255L825 238Z M455 520L515 515L515 560L455 560Z M440 600l25 0 0 42-30 0z M484 475l32 -4 0 27-32 0z M345 385l30-15 25 20-20 25z M655 128l30 0-8 36-26 0z M760 555l22 4-5 22-18-4z M540 555l20 0 0 22-20 0z" fill="#fff" />
      <path d="M700 360h25v20h-25zM700 385h25v14h-25zM700 403h25v14h-25zM730 348v66M755 345v65M730 375h25M730 410h25M718 447h60v26h-60zM487 518h24v26h-24zM660 130v30M672 130v30" fill="none" stroke="#000" strokeWidth="3.500" />
      <path d="M810 345h90" stroke="#bbb" strokeWidth="2" />
      <path d={poly([[805, 88], [880, 100], [975, 150], [995, 205], [960, 235], [920, 230], [860, 185]])} fill="#fff" stroke="#000" strokeWidth="3" />
      <path d={poly(airstrip)} fill="#000" />
      <path d={grid(airstrip, 35, 7, 7, 0.8, 2)} fill="#bbb" />
      <path d="M900 175l30-8 15 20-25 25-25-15zM880 165l15-10M955 175l25-10 8 30-25 10zM960 180h25M960 187h25M960 194h25M930 220l60-20M940 120l20 18 18 2M900 150l14 6" fill="none" stroke="#000" strokeWidth="4" />
      <path d="M1090 447L1185 455L1180 498L1090 492ZM1060 445l28 0-5 50-30-5z" fill="#fff" stroke="#000" strokeWidth="4" />
      <path d="M1035 540l18 5-6 18-16-5z" fill="#fff" />
      <path d="M897 930L905 880L960 890L955 960ZM1070 930L1140 950L1125 1000L1060 970ZM1155 945L1248 975V1035L1145 1010ZM1010 1070L1030 1025L1080 1050L1060 1090ZM1165 1110L1195 1045L1248 1040V1210L1190 1165ZM1120 1225L1150 1190L1235 1265L1205 1310ZM1000 1160Q1030 1180 1025 1210L1010 1240L970 1200ZM650 955L790 1040L810 1045L800 1080L720 1030Z" fill="#fff" stroke="#000" strokeWidth="4" />
      <path d="M905 910l5-18 12 4-3 20M1070 960l45 15M1180 1020l10-12 14 16 30 0M1200 1145l15-15 18 12-10 12M1170 1165a14 14 0 1030 0a14 14 0 10-30 0" fill="none" stroke="#000" strokeWidth="4" />
      <path d="M1200 1300l15-25 10 5" stroke="#000" strokeWidth="6" fill="none" />

      <path d="M215 700L240 690L350 765L340 825L260 795Q220 760 215 700ZM95 570L180 655L175 700Q150 700 95 610Z" fill="#fff" stroke="#000" strokeWidth="4" />
      <path d="M285 720l-35 55M330 740l-20 55M430 840l-15 25" stroke="#c4c4c4" strokeWidth="8" />

      {mains.map((d) => <path key={d} d={d} fill="none" stroke="#111" strokeWidth="17" />)}
      {streets.map((d) => <path key={d} d={d} fill="none" stroke="#111" strokeWidth="9" />)}
      {streets.map((d) => <path key={"f" + d} d={d} fill="none" stroke="#d4d4d4" strokeWidth="4.500" />)}
      {coreStreets.map((d) => <path key={d} d={d} fill="none" stroke="#b8b8b8" strokeWidth="2.800" />)}
      {mains.map((d) => <path key={"f" + d} d={d} fill="none" stroke="#c6c6c6" strokeWidth="11" />)}
      <path d={northRoad} stroke="#bfbfbf" strokeWidth="14" fill="none" />
      <path d="M640 77Q560 88 490 130M620 90Q540 108 480 150M300 240L365 190" stroke="#aaa" strokeWidth="4" fill="none" />
      <path d="M42 98L70 130L175 285" stroke="#bababa" strokeWidth="5" fill="none" />
      <path d="M72 124L175 282" stroke="#b8b8b8" strokeWidth="19" />
      <path d="M360 25L410 128M378 18L428 128M370 30L420 128" stroke="#b5b5b5" strokeWidth="5" />
      <path d="M418 60Q420 110 480 112L520 100" fill="none" stroke="#b5b5b5" strokeWidth="4" />
      <path d="M742 0L786 90M770 0L812 90" stroke="#777" strokeWidth="2" />
      <g fill="#fff" stroke="#111" strokeWidth="5">
        <ellipse cx="157" cy="345" rx="37" ry="44" />
        <path d="M192 290C225 265 250 280 262 310C272 350 260 365 245 362C215 345 215 320 192 290Z" />
        <circle cx="995" cy="263" r="29" /><circle cx="1066" cy="318" r="36" /><circle cx="973" cy="345" r="31" /><circle cx="1030" cy="392" r="33" />
        <path d="M450 160q12-12 18-2l-5 22q-10 5-14-4z" />
      </g>
      <path d="M875 438L1170 432M845 452L1155 440M940 320Q950 390 890 445M1000 175Q1000 240 930 240Q890 210 860 190M1024 190Q1090 250 1120 330L1170 430" fill="none" stroke="#111" strokeWidth="5" />
      <path d="M778 44Q850 32 905 60Q960 90 1000 160L1075 228Q1083 240 1085 218Q1095 215 1100 240Q1105 248 1130 246Q1145 250 1135 270Q1130 278 1145 285L1155 330L1180 350Q1195 362 1180 378L1148 384M780 50L860 76L870 72M875 55l30-5 5 15-10 15-22-8zM885 52v26M895 50v28M1145 320l12-6 12 14 5 20-15-5z" fill="none" stroke="#111" strokeWidth="3.500" />
      <path d={scatter([[785, 45], [850, 48], [868, 72], [800, 62]], 60, 8, block(15, 3, 8))} fill="none" stroke="#000" strokeWidth="2" />
      <path d="M58 480Q54 580 75 625L95 665Q140 735 210 795C300 840 420 895 560 975Q720 1070 850 1150Q1010 1255 1150 1360Q1200 1395 1248 1458" fill="none" stroke="#111" strokeWidth="3.500" />
      <path d="M72 620Q130 710 200 770C300 820 430 882 560 948Q660 1000 850 1128Q1010 1230 1150 1330L1248 1415" fill="none" stroke="#111" strokeWidth="4" />
      <path d="M480 925L600 985L720 1070L850 1145M670 1010L830 1125M690 1015L860 1130M370 870l-5 12M945 1225L1000 1262" fill="none" stroke="#000" strokeWidth="4" />

      <g fill="none" stroke="#2ce4e6" strokeWidth="8" strokeDasharray="6 1.200">
        <path d="M120 168l30 45M525 86l80-18M970 112l80 84M128 298l-42 62M64 470v75M770 145l32 55M208 630l22-85M865 470l60 65M1085 563l110 0M1195 435l53 20M275 265l45 35M605 472l120 0M972 1140l85 0M1110 1340l55 45M1175 1290l30 30M1100 1050l25-45M1095 1080l50 30" />
        <path d="M1195 1115h53" strokeWidth="5" />
      </g>
      <rect x="1213" y="1311" width="24" height="24" fill="#f6ec43" transform="rotate(-35 1225 1323)" />
      <text transform="translate(583 1030) rotate(32)" fontFamily="Liberation Sans" fontWeight="700" fontSize="22" textLength="160" lengthAdjust="spacingAndGlyphs" fill="#10e0f0" stroke="#10e0f0" strokeWidth="1">NEW MARINA RD.</text>
    </g>
  </MapSvg>
);

/* ---------- data ---------- */
type Entry = [string, number?, boolean?];
const rowOne: Entry[] = [["newFile", 7], ["open"], ["save"], ["layout"], ["zoomFull", 223], ["zoomSel"], ["zoomLayer"], ["zoomNative"], ["zoomLast"], ["zoomNext"], ["mapView"], ["bookmark"], ["bookmarks"], ["refresh"], ["|handle", 11], ["identify", 7], ["action"], ["|caret", 6, true], ["select", 7], ["|caret", 6], ["form", 8], ["|caret", 5], ["deselect", 8], ["table"], ["abacus"], ["gear"], ["sigma"], ["measure"], ["|caret", 5], ["tip", 7], ["text"], ["|caret", 6]];
const rowTwo: Entry[] = [["addLayer", 7], ["geopackage"], ["vector"], ["feather"], ["vertexTool", 231], ["|caret", 4, true], ["editAttr", 8], ["del", 8], ["cut", 10], ["copy"], ["paste"], ["undo"], ["redo"], ["|handle", 11], ["abc", 7], ["diagram"], ["|sep", 9], ["abcPinBlue", 7], ["abcRed", 8], ["|sep", 9], ["abcPin", 7], ["abcEye"], ["abcMove"], ["abcRotate"], ["abcEdit"], ["|handle", 12], ["globe", 7], ["|handle", 12], ["python", 7], ["binoculars"], ["|handle", 12], ["help", 7], ["|handle", 11], ["cross", 10]];

const Tools = ({ list }: { list: Entry[] }) => (
  <>
    {list.map(([n, ml = 9, faded], i) =>
      n === "|handle" ? <Handle key={i} $ml={ml} /> : n === "|caret" ? <Caret key={i} $ml={ml} $faded={faded} /> : n === "|sep" ? <Divider key={i} $ml={ml} /> : (
        <Tool key={i} $ml={ml}><Icon n={n} /></Tool>
      )
    )}
  </>
);

/* An ampersand marks the mnemonic letter that follows it. */
const Mnemonic = ({ t }: { t: string }) => {
  const i = t.indexOf("&");
  return i < 0 ? <span>{t}</span> : <span>{t.slice(0, i)}<u>{t[i + 1]}</u>{t.slice(i + 2)}</span>;
};

const menus: [string, number][] = [["Pro&ject", 51], ["&Edit", 34], ["&View", 39], ["&Layer", 244], ["&Database", 62], ["&Web", 38], ["&Mesh", 43], ["Pro&cessing", 71], ["&Help", 30]];

type Cmd = { t: string; icon?: string; state?: "on" | "off"; sub?: boolean } | null;
const layerMenu: Cmd[] = [
  { t: "&Zoom to Layer", icon: "zoomLayer" }, { t: "&Zoom to Selection", icon: "zoomLayer", state: "off" }, { t: "&Show in Overview", icon: "overview" },
  { t: "Show Feature Count", icon: "checkbox" }, { t: "Copy Layer" }, { t: "Re&name Layer" }, null,
  { t: "&Duplicate Layer", icon: "duplicate" }, { t: "&Remove Layer...", icon: "remove" }, null, { t: "Move Out of &Group" }, null,
  { t: "&Open Attribute Table", icon: "table" }, { t: "Toggle Editing", icon: "pencil" }, { t: "&Filter..." }, { t: "Change Data Source..." }, null,
  { t: "&Set Layer Scale Visibility..." }, { t: "Set CRS", sub: true }, null, { t: "Export", sub: true, state: "on" }, null,
  { t: "Styles", sub: true }, { t: "&Properties..." },
];
const exportMenu: Cmd[] = [{ t: "Save Features As...", state: "on" }, { t: "Save Selected Features As...", state: "off" }, { t: "Save as Layer Definition File..." }, { t: "Save as QGIS Layer Style File..." }];
const MenuIcon = styled.span<{ $faded: boolean }>`opacity: ${(p) => (p.$faded ? 0.3 : 1)}; width: 16px; height: 16px; display: flex;`;

const Menu = ({ x, y, w, list, indent }: { x: number; y: number; w: number; list: Cmd[]; indent: number }) => (
  <Popup $x={x} $y={y} $w={w}>
    {list.map((c, i) => c === null ? <Rule key={i} /> : (
      <Item key={i} $state={c.state}>
        <ItemIcon $w={indent}>
          {c.icon === "checkbox" ? <ItemBox /> : c.icon ? <MenuIcon $faded={c.state === "off"}><Icon n={c.icon} /></MenuIcon> : null}
        </ItemIcon>
        <Mnemonic t={c.t} />
        {c.sub && <Arrow $on={c.state === "on"} />}
      </Item>
    ))}
  </Popup>
);

const browser: [string, string, "closed" | "none"][] = [["Favorites", "star", "none"], ["Spatial Bookmarks", "bookmarks", "closed"], ["Home", "home", "closed"], ["C:\\", "folder", "closed"], ["E:\\", "folder", "closed"], ["F:\\", "folder", "closed"], ["GeoPackage", "box", "closed"], ["SpatiaLite", "quill", "none"]];
const groups: [string, "closed" | "none"][] = [["Road Names", "closed"], ["Lagos Island", "none"], ["Roads", "closed"]];

const Swatch = styled.span`width: 16px; height: 1px; background: #1c3c66; margin-left: 6px;`;
const SmallTool = styled.span`width: 16px; height: 16px; display: flex; flex: none;`;

export default function App() {
  return (
    <Window>
      <Global />
      <TitleBar>
        <TreeIcon $ml={0}><Icon n="logo" /></TreeIcon>
        <TitleText>*Untitled Project - QGIS</TitleText>
        <WinButton><svg width="10" height="10"><path d="M0 5.500h10" stroke="#000" /></svg></WinButton>
        <WinButton><svg width="10" height="10"><path d="M.5 2.500h7v7h-7zM2.500 2.500v-2h7v7h-2" fill="none" stroke="#000" /></svg></WinButton>
        <WinButton><svg width="10" height="10"><path d="M0 0l10 10M10 0L0 10" stroke="#000" strokeWidth="1.100" /></svg></WinButton>
      </TitleBar>
      <MenuBar>{menus.map(([t, w]) => <MenuName key={t} $w={w}><Mnemonic t={t} /></MenuName>)}</MenuBar>
      <ToolRow $h={39}><Handle /><Tools list={rowOne} /></ToolRow>
      <ToolRow $h={39}><Handle /><Tools list={rowTwo} /></ToolRow>
      <ToolRow $h={38}><Handle /><Tools list={[["jar", 7]]} /></ToolRow>
      <Work>
        <Docks>
          <DockTitle>Browser</DockTitle>
          <DockTools>
            {["addItem", "refresh", "funnel", "collapse", "info"].map((n) => <SmallTool key={n}><Icon n={n} /></SmallTool>)}
          </DockTools>
          <Tree $h={146}>
            {browser.map(([t, icon, k]) => (
              <TreeRow key={t} $bg={t === "GeoPackage" ? "#efefef" : undefined}>
                <Twisty $kind={k} /><TreeIcon><Icon n={icon} /></TreeIcon><TreeText $ml={6}>{t}</TreeText>
              </TreeRow>
            ))}
          </Tree>
          <HSplit />
          <DockTitle>Layers</DockTitle>
          <DockTools>
            {["brush", "addGroup", "eye", "funnel", "epsilon"].map((n) => <SmallTool key={n}><Icon n={n} /></SmallTool>)}
            <Caret $ml={-3} /><SmallTool><Icon n="collapse" /></SmallTool>
          </DockTools>
          <Tree $h={328}>
            <TreeRow><Twisty $kind="open" /><Check $ml={3}><Icon n="tick" /></Check><TreeIcon $ml={7}><Icon n="group" /></TreeIcon><TreeText $ml={5}>lagos_islandb</TreeText></TreeRow>
            <TreeRow $bg="#3399ff" $fg="#fff"><Twisty $kind="none" /><Check $ml={23}><Icon n="tick" /></Check><Swatch /><TreeText $ml={6} $strong>polylines</TreeText><RowEnd $wide><TreeIcon $ml={0}><Icon n="filterOut" /></TreeIcon></RowEnd></TreeRow>
            {groups.map(([t, k]) => (
              <TreeRow key={t}><Twisty $kind={k} /><Check $ml={3}><Icon n="tick" /></Check><TreeIcon $ml={7}><Icon n="group" /></TreeIcon><TreeText $ml={5}>{t}</TreeText><RowEnd /></TreeRow>
            ))}
          </Tree>
        </Docks>
        <VSplit />
        <MapFrame><MapDrawing /></MapFrame>
      </Work>
      <Status>
        <Field $w={200} $ml={0} $pad={7}><StatusIcon $ml={0}><Icon n="search" /></StatusIcon><Placeholder>Type to locate (Ctrl+K)</Placeholder></Field>
        <StatusText $w={57} $ml={388}>Coordinate</StatusText>
        <Field $w={72} $ml={0} $pad={6}>-2194,1471</Field>
        <StatusIcon $ml={4}><Icon n="extents" /></StatusIcon>
        <StatusText $w={29} $ml={12}>Scale</StatusText>
        <Field $w={81} $ml={0} $pad={1}>742182767<FieldEnd $w={20}><Tri /></FieldEnd></Field>
        <StatusIcon $ml={10}><Icon n="lock" /></StatusIcon>
        <StatusText $w={48} $ml={6}>Magnifier</StatusText>
        <Field $w={88} $ml={0}>100%<FieldEnd $w={14}><Tri $up /><Tri /></FieldEnd></Field>
        <StatusText $w={51} $ml={8}>Rotation</StatusText>
        <Field $w={84} $ml={0} $pad={3}>0.0 °<FieldEnd $w={14}><Tri $up /><Tri /></FieldEnd></Field>
        <Check $ml={6}><Icon n="tick" /></Check>
        <StatusText $w={53} $ml={4}>Render</StatusText>
        <StatusIcon $ml={0}><Icon n="crs" /></StatusIcon>
        <StatusText $w={73} $ml={3}>EPSG:4326</StatusText>
        <StatusIcon $ml={0}><Icon n="bubble" /></StatusIcon>
      </Status>
      <TaskEdge />
      <Menu x={149} y={9} w={230} list={layerMenu} indent={27} />
      <Menu x={379} y={364} w={216} list={exportMenu} indent={26} />
    </Window>
  );
}
